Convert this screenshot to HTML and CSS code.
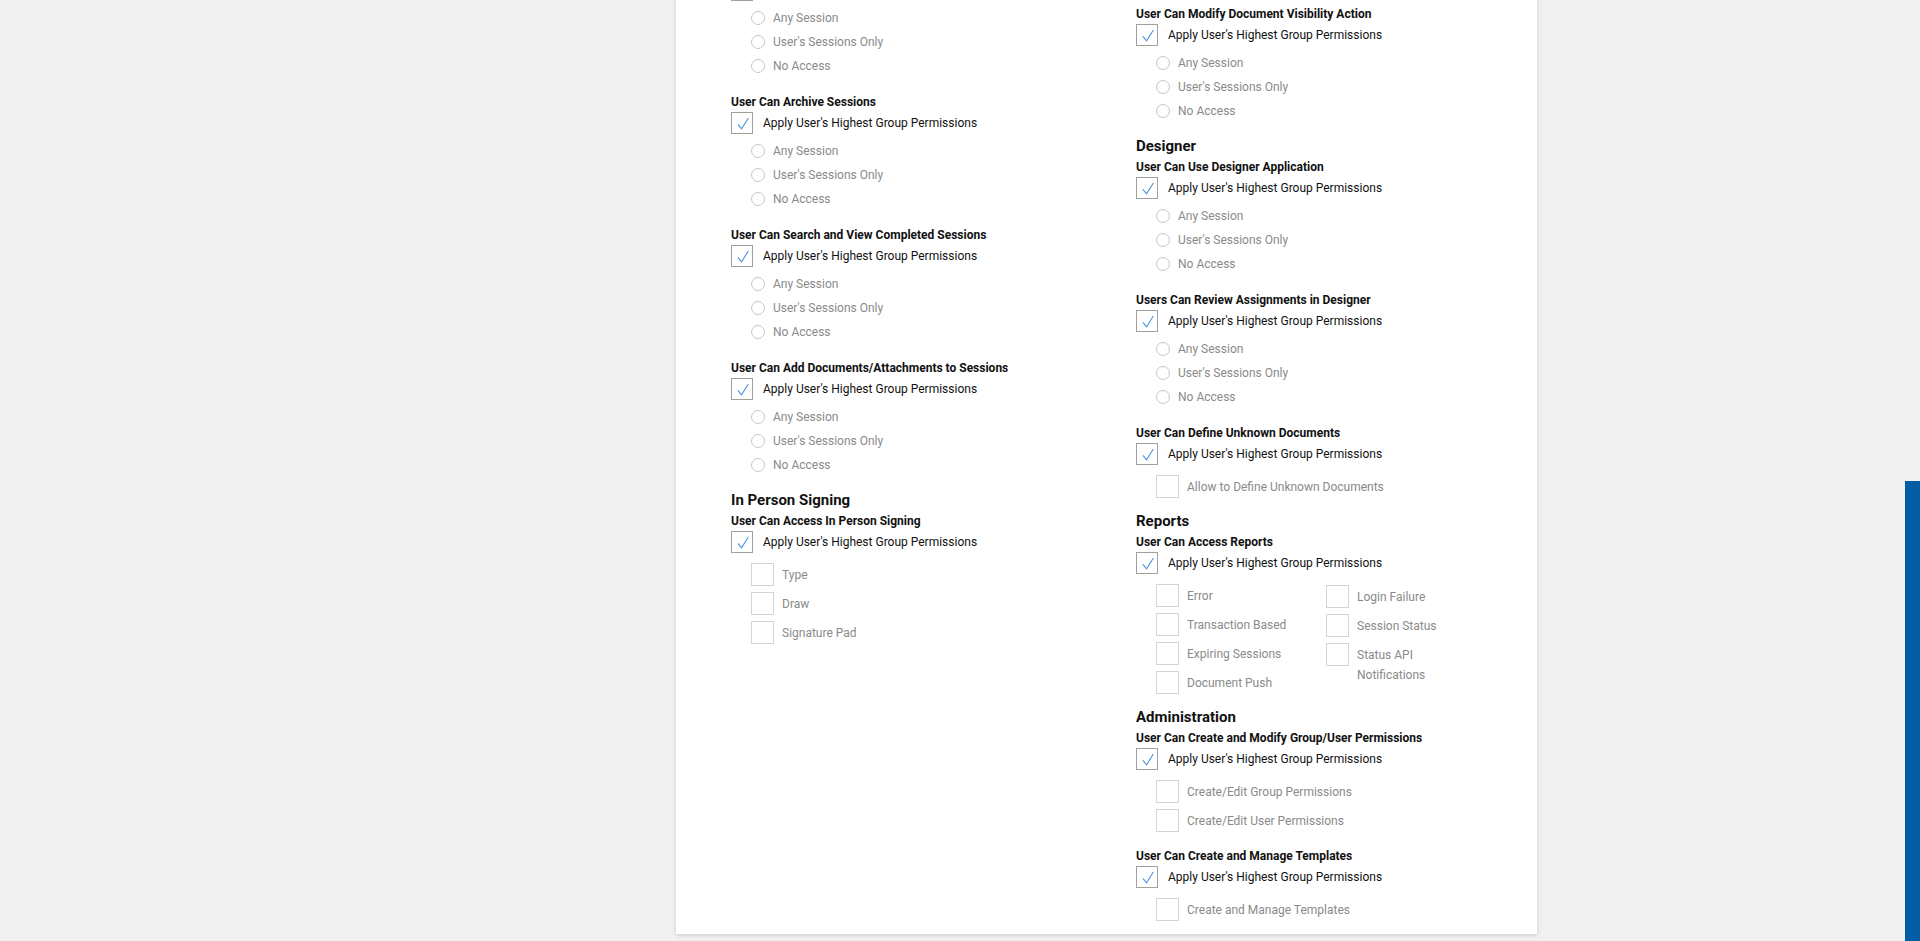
FILE: index.html
```html
<!DOCTYPE html>
<html lang="en">
<head>
  <meta charset="UTF-8">
  <title>User Permissions</title>
  <meta name="viewport" content="width=device-width, initial-scale=1.0">
  <link rel="stylesheet" href="styles.css">
</head>
<body>

  <div class="page">
    <section class="card">

      <!-- left column -->
      <div class="col">
        <div class="perm">
          <div class="perm-label">User Can Create Sessions</div>
          <label class="apply"><span class="box checked"><svg viewBox="0 0 22 22"><path d="M6.5 12.5 L10.5 17.5 L18 5.5"/></svg></span>Apply User's Highest Group Permissions</label>
          <div class="radios">
            <div class="radio"><span class="dot"></span>Any Session</div>
            <div class="radio"><span class="dot"></span>User's Sessions Only</div>
            <div class="radio"><span class="dot"></span>No Access</div>
          </div>
        </div>

        <div class="perm">
          <div class="perm-label">User Can Cancel Sessions</div>
          <label class="apply"><span class="box checked"><svg viewBox="0 0 22 22"><path d="M6.5 12.5 L10.5 17.5 L18 5.5"/></svg></span>Apply User's Highest Group Permissions</label>
          <div class="radios">
            <div class="radio"><span class="dot"></span>Any Session</div>
            <div class="radio"><span class="dot"></span>User's Sessions Only</div>
            <div class="radio"><span class="dot"></span>No Access</div>
          </div>
        </div>

        <div class="perm">
          <div class="perm-label">User Can Archive Sessions</div>
          <label class="apply"><span class="box checked"><svg viewBox="0 0 22 22"><path d="M6.5 12.5 L10.5 17.5 L18 5.5"/></svg></span>Apply User's Highest Group Permissions</label>
          <div class="radios">
            <div class="radio"><span class="dot"></span>Any Session</div>
            <div class="radio"><span class="dot"></span>User's Sessions Only</div>
            <div class="radio"><span class="dot"></span>No Access</div>
          </div>
        </div>

        <div class="perm">
          <div class="perm-label">User Can Search and View Completed Sessions</div>
          <label class="apply"><span class="box checked"><svg viewBox="0 0 22 22"><path d="M6.5 12.5 L10.5 17.5 L18 5.5"/></svg></span>Apply User's Highest Group Permissions</label>
          <div class="radios">
            <div class="radio"><span class="dot"></span>Any Session</div>
            <div class="radio"><span class="dot"></span>User's Sessions Only</div>
            <div class="radio"><span class="dot"></span>No Access</div>
          </div>
        </div>

        <div class="perm">
          <div class="perm-label">User Can Add Documents/Attachments to Sessions</div>
          <label class="apply"><span class="box checked"><svg viewBox="0 0 22 22"><path d="M6.5 12.5 L10.5 17.5 L18 5.5"/></svg></span>Apply User's Highest Group Permissions</label>
          <div class="radios">
            <div class="radio"><span class="dot"></span>Any Session</div>
            <div class="radio"><span class="dot"></span>User's Sessions Only</div>
            <div class="radio"><span class="dot"></span>No Access</div>
          </div>
        </div>

        <h2 class="section-title">In Person Signing</h2>
        <div class="perm">
          <div class="perm-label">User Can Access In Person Signing</div>
          <label class="apply"><span class="box checked"><svg viewBox="0 0 22 22"><path d="M6.5 12.5 L10.5 17.5 L18 5.5"/></svg></span>Apply User's Highest Group Permissions</label>
          <div class="subs">
            <div class="sub"><span class="box"></span><span class="sub-text">Type</span></div>
            <div class="sub"><span class="box"></span><span class="sub-text">Draw</span></div>
            <div class="sub"><span class="box"></span><span class="sub-text">Signature Pad</span></div>
          </div>
        </div>
      </div>

      <!-- right column -->
      <div class="col">
        <div class="perm">
          <div class="perm-label">User Can Modify Document Recipients</div>
          <label class="apply"><span class="box checked"><svg viewBox="0 0 22 22"><path d="M6.5 12.5 L10.5 17.5 L18 5.5"/></svg></span>Apply User's Highest Group Permissions</label>
          <div class="subs">
            <div class="sub"><span class="box"></span><span class="sub-text">Modify Recipients</span></div>
          </div>
        </div>

        <div class="perm">
          <div class="perm-label">User Can Modify Document Fields</div>
          <label class="apply"><span class="box checked"><svg viewBox="0 0 22 22"><path d="M6.5 12.5 L10.5 17.5 L18 5.5"/></svg></span>Apply User's Highest Group Permissions</label>
          <div class="subs">
            <div class="sub"><span class="box"></span><span class="sub-text">Modify Fields</span></div>
          </div>
        </div>

        <div class="perm">
          <div class="perm-label">User Can Modify Document Visibility Action</div>
          <label class="apply"><span class="box checked"><svg viewBox="0 0 22 22"><path d="M6.5 12.5 L10.5 17.5 L18 5.5"/></svg></span>Apply User's Highest Group Permissions</label>
          <div class="radios">
            <div class="radio"><span class="dot"></span>Any Session</div>
            <div class="radio"><span class="dot"></span>User's Sessions Only</div>
            <div class="radio"><span class="dot"></span>No Access</div>
          </div>
        </div>

        <h2 class="section-title">Designer</h2>
        <div class="perm">
          <div class="perm-label">User Can Use Designer Application</div>
          <label class="apply"><span class="box checked"><svg viewBox="0 0 22 22"><path d="M6.5 12.5 L10.5 17.5 L18 5.5"/></svg></span>Apply User's Highest Group Permissions</label>
          <div class="radios">
            <div class="radio"><span class="dot"></span>Any Session</div>
            <div class="radio"><span class="dot"></span>User's Sessions Only</div>
            <div class="radio"><span class="dot"></span>No Access</div>
          </div>
        </div>

        <div class="perm">
          <div class="perm-label">Users Can Review Assignments in Designer</div>
          <label class="apply"><span class="box checked"><svg viewBox="0 0 22 22"><path d="M6.5 12.5 L10.5 17.5 L18 5.5"/></svg></span>Apply User's Highest Group Permissions</label>
          <div class="radios">
            <div class="radio"><span class="dot"></span>Any Session</div>
            <div class="radio"><span class="dot"></span>User's Sessions Only</div>
            <div class="radio"><span class="dot"></span>No Access</div>
          </div>
        </div>

        <div class="perm">
          <div class="perm-label">User Can Define Unknown Documents</div>
          <label class="apply"><span class="box checked"><svg viewBox="0 0 22 22"><path d="M6.5 12.5 L10.5 17.5 L18 5.5"/></svg></span>Apply User's Highest Group Permissions</label>
          <div class="subs">
            <div class="sub"><span class="box"></span><span class="sub-text">Allow to Define Unknown Documents</span></div>
          </div>
        </div>

        <h2 class="section-title">Reports</h2>
        <div class="perm">
          <div class="perm-label">User Can Access Reports</div>
          <label class="apply"><span class="box checked"><svg viewBox="0 0 22 22"><path d="M6.5 12.5 L10.5 17.5 L18 5.5"/></svg></span>Apply User's Highest Group Permissions</label>
          <div class="report-grid">
            <div class="subs">
              <div class="sub"><span class="box"></span><span class="sub-text">Error</span></div>
              <div class="sub"><span class="box"></span><span class="sub-text">Transaction Based</span></div>
              <div class="sub"><span class="box"></span><span class="sub-text">Expiring Sessions</span></div>
              <div class="sub"><span class="box"></span><span class="sub-text">Document Push</span></div>
            </div>
            <div class="subs narrow">
              <div class="sub"><span class="box"></span><span class="sub-text">Login Failure</span></div>
              <div class="sub"><span class="box"></span><span class="sub-text">Session Status</span></div>
              <div class="sub"><span class="box"></span><span class="sub-text">Status API Notifications</span></div>
            </div>
          </div>
        </div>

        <h2 class="section-title">Administration</h2>
        <div class="perm">
          <div class="perm-label">User Can Create and Modify Group/User Permissions</div>
          <label class="apply"><span class="box checked"><svg viewBox="0 0 22 22"><path d="M6.5 12.5 L10.5 17.5 L18 5.5"/></svg></span>Apply User's Highest Group Permissions</label>
          <div class="subs">
            <div class="sub"><span class="box"></span><span class="sub-text">Create/Edit Group Permissions</span></div>
            <div class="sub"><span class="box"></span><span class="sub-text">Create/Edit User Permissions</span></div>
          </div>
        </div>

        <div class="perm">
          <div class="perm-label">User Can Create and Manage Templates</div>
          <label class="apply"><span class="box checked"><svg viewBox="0 0 22 22"><path d="M6.5 12.5 L10.5 17.5 L18 5.5"/></svg></span>Apply User's Highest Group Permissions</label>
          <div class="subs">
            <div class="sub"><span class="box"></span><span class="sub-text">Create and Manage Templates</span></div>
          </div>
        </div>
      </div>

    </section>
  </div>

  <div class="scroll-thumb"></div>

</body>
</html>
```

FILE: styles.css
```css
:root {
  --bg: #f0f0f0;
  --white: #ffffff;
  --text: #111111;
  --muted: #8a8a8a;
  --box-dark: #a0a0a0;
  --box-light: #d4d4d4;
  --dot: #c6c6c6;
  --check: #4a93dc;
  --scroll: #005da6;
  --font: 'Roboto', 'Liberation Sans', Arial, sans-serif;
}

html,
body {
  margin: 0;
  height: 100%;
  overflow: hidden;
}

body {
  font-family: var(--font);
  font-size: 12px;
  background-color: var(--bg);
  color: var(--text);
}

.page {
  display: flex;
  padding-left: 676px;
}

.card {
  width: 861px;
  box-sizing: border-box;
  margin-top: -195px;
  padding: 20px 0 0 55px;
  background-color: var(--white);
  box-shadow: 0 1px 4px rgba(0, 0, 0, 0.16);
  display: grid;
  grid-template-columns: 405px 1fr;
  align-items: start;
}

.section-title {
  margin: 0;
  font-size: 15px;
  line-height: 20px;
  font-weight: 700;
}

.perm {
  margin-bottom: 13px;
}

.perm-label {
  padding-top: 2px;
  margin-bottom: 1px;
  font-weight: 700;
  line-height: 18px;
}

.apply {
  display: flex;
  align-items: center;
  height: 22px;
}

.box {
  flex: none;
  width: 23px;
  height: 23px;
  box-sizing: border-box;
  border: 1px solid var(--box-light);
  background-color: var(--white);
}

.apply .box {
  width: 22px;
  height: 22px;
  margin-right: 10px;
  border-color: var(--box-dark);
}

.box svg {
  display: block;
  width: 20px;
  height: 20px;
}

.box path {
  fill: none;
  stroke: var(--check);
  stroke-width: 1.2;
}

.radios {
  margin-top: 5px;
  padding-left: 20px;
}

.radio {
  display: flex;
  align-items: center;
  height: 24px;
  color: var(--muted);
}

.dot {
  width: 14px;
  height: 14px;
  box-sizing: border-box;
  border: 1px solid var(--dot);
  border-radius: 50%;
  margin-right: 8px;
}

.subs {
  margin-top: 10px;
  padding-left: 20px;
  display: flex;
  flex-direction: column;
  gap: 6px;
}

.sub {
  display: flex;
  align-items: flex-start;
  min-height: 23px;
}

.sub-text {
  margin-left: 8px;
  padding-top: 2px;
  line-height: 20px;
  color: var(--muted);
}

.report-grid {
  display: flex;
}

.report-grid .subs {
  width: 150px;
}

.report-grid .narrow {
  width: 130px;
  padding-top: 1px;
}

.scroll-thumb {
  position: fixed;
  top: 481px;
  right: 0;
  bottom: 0;
  width: 15px;
  background-color: var(--scroll);
}
```
